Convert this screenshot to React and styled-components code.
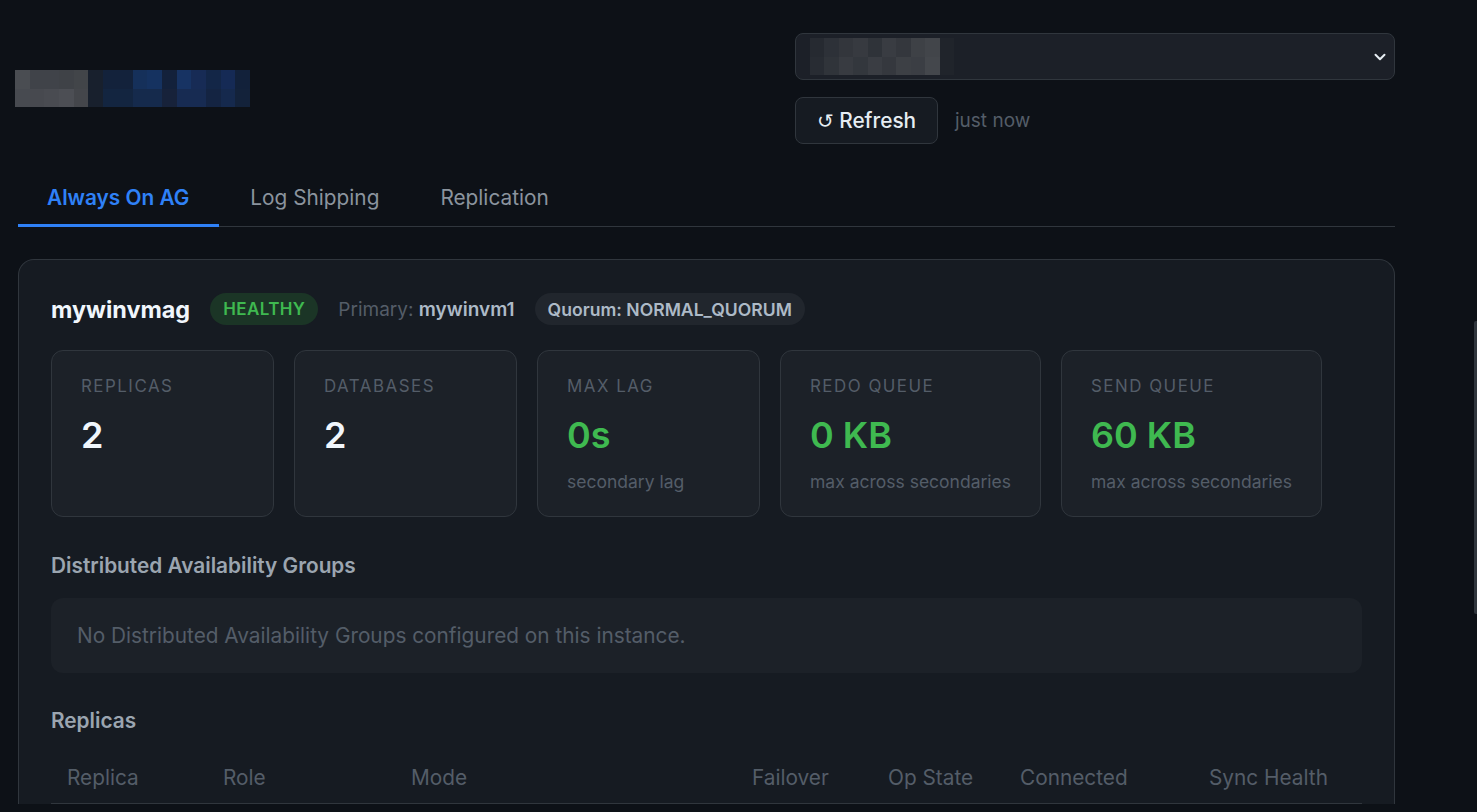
import React from 'react';
import styled, { createGlobalStyle } from 'styled-components';

const GlobalStyle = createGlobalStyle`
  html, body {
    margin: 0;
    padding: 0;
    background: #0d1117;
    font-family: Inter, "Noto Sans", "Liberation Sans", sans-serif;
    color: #e6edf3;
  }
  * { box-sizing: border-box; }
`;

const Page = styled.div`
  width: 1377px;
  margin-left: 18px;
  padding-top: 33px;
  min-height: 812px;
`;

const Header = styled.header`
  display: flex;
  justify-content: space-between;
  align-items: center;
`;

const Pixels = styled.div`
  display: grid;
  grid-template-columns: repeat(${p => p.cols}, ${p => p.cell}px);
  grid-auto-rows: ${p => p.rowH}px;
  margin-left: ${p => p.offset || 0}px;
`;

const Pixel = styled.span`
  background: ${p => p.c};
`;

const Controls = styled.div`
  width: 600px;
  display: flex;
  flex-direction: column;
  gap: 17px;
`;

const Select = styled.div`
  height: 47px;
  display: flex;
  align-items: center;
  justify-content: space-between;
  padding: 0 7px 0 14px;
  background: #1c2028;
  border: 1px solid #30363d;
  border-radius: 8px;
`;

const RefreshRow = styled.div`
  display: flex;
  align-items: center;
  gap: 17px;
`;

const Button = styled.button`
  height: 47px;
  width: 143px;
  padding: 0;
  background: #161b22;
  border: 1px solid #30363d;
  border-radius: 8px;
  color: #e6edf3;
  font-family: inherit;
  font-size: 20.8px;
  font-weight: 500;
`;

const Spin = styled.span`
  font-family: "DejaVu Sans", sans-serif;
  font-weight: 400;
  font-size: 20px;
`;

const Muted = styled.span`
  color: #545d68;
  font-size: 19px;
`;

const Tabs = styled.nav`
  display: flex;
  gap: 2px;
  margin-top: 26px;
  border-bottom: 1px solid #30363d;
`;

const Tab = styled.div`
  padding: 16px 30px 14px 29px;
  font-size: 20.8px;
  line-height: 24px;
  font-weight: ${p => (p.active ? 600 : 400)};
  color: ${p => (p.active ? '#2f81f7' : '#8b949e')};
  border-bottom: 3px solid ${p => (p.active ? '#2f81f7' : 'transparent')};
  margin-bottom: -1px;
`;

const Card = styled.section`
  margin-top: 32px;
  background: #161b22;
  border: 1px solid #30363d;
  border-bottom: none;
  border-radius: 16px 16px 0 0;
  padding: 33px 32px 0;
`;

const TitleRow = styled.div`
  display: flex;
  align-items: center;
  gap: 20px;
  height: 32px;
`;

const Title = styled.h2`
  margin: 0;
  font-size: 23.4px;
  font-weight: 700;
  color: #f0f6fc;
`;

const Pill = styled.span`
  height: 32px;
  display: inline-flex;
  align-items: center;
  padding: 0 13px;
  border-radius: 16px;
  font-size: ${p => (p.tone === 'green' ? '17px' : '17.6px')};
  font-weight: 600;
  background: ${p => (p.tone === 'green' ? '#1b3526' : '#21262d')};
  color: ${p => (p.tone === 'green' ? '#3fb950' : '#adbac7')};
  letter-spacing: ${p => (p.tone === 'green' ? '0.4px' : '0')};
`;

const Primary = styled.span`
  font-size: 19px;
  color: #545d68;
  b {
    color: #adbac7;
    font-weight: 600;
  }
`;

const Stats = styled.div`
  display: flex;
  gap: 20px;
  margin-top: 25px;
`;

const Stat = styled.div`
  min-width: 223px;
  height: 167px;
  padding: 25px 29px 0;
  background: #1c2128;
  border: 1px solid #30363d;
  border-radius: 12px;
`;

const StatLabel = styled.div`
  font-size: 16.9px;
  line-height: 20px;
  letter-spacing: 1.5px;
  color: #545d68;
  text-transform: uppercase;
`;

const StatValue = styled.div`
  margin-top: 17px;
  font-size: 36px;
  line-height: 44px;
  font-weight: 600;
  color: ${p => (p.green ? '#3fb950' : '#f0f6fc')};
`;

const StatSub = styled.div`
  margin-top: 14px;
  font-size: 17.5px;
  line-height: 22px;
  color: #545d68;
  white-space: nowrap;
`;

const SectionTitle = styled.h3`
  margin: ${p => p.gap}px 0 0;
  font-size: 20.8px;
  line-height: 26px;
  font-weight: 600;
  color: #9ba5b0;
`;

const Empty = styled.div`
  margin-top: 19px;
  height: 75px;
  display: flex;
  align-items: center;
  padding: 0 26px;
  background: #1c2128;
  border-radius: 12px;
  font-size: 20.8px;
  color: #545d68;
`;

const Table = styled.table`
  margin-top: 18px;
  width: 100%;
  border-collapse: collapse;
  table-layout: fixed;
`;

const Th = styled.th`
  width: ${p => p.w}px;
  padding: 14px 16px 13px;
  text-align: left;
  font-size: 20.8px;
  line-height: 24px;
  font-weight: 400;
  color: #545d68;
  border-bottom: 1px solid #30363d;
`;

const ScrollThumb = styled.div`
  position: fixed;
  right: 0;
  top: 321px;
  width: 3px;
  height: 293px;
  background: #30363d;
  border-radius: 2px 0 0 2px;
`;

const titleRows = [
  ['#4a4d52', '#404349', '#404349', '#3f4247', '#424549', '#18202d', '#13223b', '#13223b', '#15305a', '#153260', '#13213b', '#173363', '#172b55', '#132647', '#152a55', '#12213a'],
  ['#474a50', '#47494f', '#494b51', '#4c4e54', '#44464b', '#18202d', '#132540', '#132540', '#152a4c', '#152a4c', '#17223a', '#172b52', '#172b52', '#142442', '#15294d', '#13223a'],
];

const selectRows = [
  ['#262a31', '#2d3138', '#33363c', '#373a40', '#2f3339', '#393c42', '#34373d', '#3e4146', '#42454a', '#20242b'],
  ['#282c33', '#30343a', '#383b41', '#33373d', '#3a3d43', '#35383e', '#3d4045', '#3b3e44', '#44474c', '#20242b'],
];

const stats = [
  { label: 'Replicas', value: '2' },
  { label: 'Databases', value: '2' },
  { label: 'Max Lag', value: '0s', sub: 'secondary lag', green: true },
  { label: 'Redo Queue', value: '0 KB', sub: 'max across secondaries', green: true },
  { label: 'Send Queue', value: '60 KB', sub: 'max across secondaries', green: true },
];

const columns = [
  ['Replica', 156],
  ['Role', 188],
  ['Mode', 341],
  ['Failover', 136],
  ['Op State', 132],
  ['Connected', 189],
  ['Sync Health', 169],
];

const Chevron = () => (
  <svg width="14" height="14" viewBox="0 0 14 14" fill="none">
    <path d="M2.5 4.8 L7 9.3 L11.5 4.8" stroke="#e6edf3" strokeWidth="2" strokeLinecap="round" strokeLinejoin="round" />
  </svg>
);

const PixelBlock = ({ rows, cell, rowH, offset }) => (
  <Pixels cols={rows[0].length} cell={cell} rowH={rowH} offset={offset}>
    {rows.flat().map((c, i) => (
      <Pixel key={i} c={c} />
    ))}
  </Pixels>
);

export default function App() {
  return (
    <>
      <GlobalStyle />
      <Page>
        <Header>
          <PixelBlock rows={titleRows} cell={14.7} rowH={18.5} offset={-3} />
          <Controls>
            <Select>
              <PixelBlock rows={selectRows} cell={14.4} rowH={18.5} />
              <Chevron />
            </Select>
            <RefreshRow>
              <Button>
                <Spin>↺</Spin> Refresh
              </Button>
              <Muted>just now</Muted>
            </RefreshRow>
          </Controls>
        </Header>

        <Tabs>
          <Tab active>Always On AG</Tab>
          <Tab>Log Shipping</Tab>
          <Tab>Replication</Tab>
        </Tabs>

        <Card>
          <TitleRow>
            <Title>mywinvmag</Title>
            <Pill tone="green">HEALTHY</Pill>
            <Primary>
              Primary: <b>mywinvm1</b>
            </Primary>
            <Pill>Quorum: NORMAL_QUORUM</Pill>
          </TitleRow>

          <Stats>
            {stats.map(s => (
              <Stat key={s.label}>
                <StatLabel>{s.label}</StatLabel>
                <StatValue green={s.green}>{s.value}</StatValue>
                {s.sub && <StatSub>{s.sub}</StatSub>}
              </Stat>
            ))}
          </Stats>

          <SectionTitle gap={36}>Distributed Availability Groups</SectionTitle>
          <Empty>No Distributed Availability Groups configured on this instance.</Empty>

          <SectionTitle gap={35}>Replicas</SectionTitle>
          <Table>
            <thead>
              <tr>
                {columns.map(([name, w]) => (
                  <Th key={name} w={w}>
                    {name}
                  </Th>
                ))}
              </tr>
            </thead>
          </Table>
        </Card>
      </Page>
      <ScrollThumb />
    </>
  );
}
